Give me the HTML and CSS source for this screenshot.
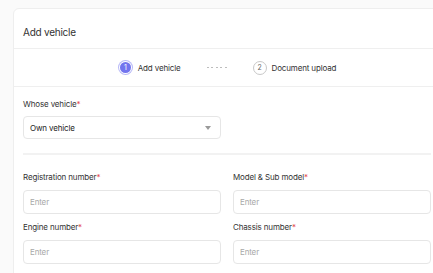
FILE: index.html
```html
<!DOCTYPE html>
<html lang="en">
<head>
  <meta charset="UTF-8">
  <title>Add vehicle</title>
  <link rel="stylesheet" href="styles.css">
</head>
<body>
  <div class="card">
    <div class="card-header">Add vehicle</div>

    <div class="stepper">
      <div class="step active">
        <span class="step-num">1</span>
        <span>Add vehicle</span>
      </div>
      <div class="step-line"></div>
      <div class="step">
        <span class="step-num">2</span>
        <span>Document upload</span>
      </div>
    </div>

    <div class="form">
      <div class="field">
        <label>Whose vehicle<span class="req">*</span></label>
        <div class="select">
          <span>Own vehicle</span>
          <svg width="6" height="4" viewBox="0 0 6 4"><path d="M0 0h6L3 4z" fill="#9a9a9a"/></svg>
        </div>
      </div>

      <hr class="divider">

      <div class="grid">
        <div class="field">
          <label>Registration number<span class="req">*</span></label>
          <input type="text" placeholder="Enter">
        </div>
        <div class="field">
          <label>Model &amp; Sub model<span class="req">*</span></label>
          <input type="text" placeholder="Enter">
        </div>
        <div class="field">
          <label>Engine number<span class="req">*</span></label>
          <input type="text" placeholder="Enter">
        </div>
        <div class="field">
          <label>Chassis number<span class="req">*</span></label>
          <input type="text" placeholder="Enter">
        </div>
      </div>
    </div>
  </div>
</body>
</html>
```

FILE: styles.css
```css
body {
  font-family: 'Inter', 'Noto Sans', sans-serif;
  background-color: #fafafa;
  margin: 0;
  padding: 8px 0 0 13px;
  overflow: hidden;
  height: 273px;
  box-sizing: border-box;
  color: #2b2b2b;
  letter-spacing: -0.15px;
}

.card {
  background-color: #fff;
  border: 1px solid #eeeeee;
  border-radius: 6px;
  width: 428px;
  box-sizing: border-box;
}

.card-header {
  height: 40px;
  box-sizing: border-box;
  padding: 17px 0 0 9px;
  font-size: 10px;
  letter-spacing: -0.25px;
  color: #333;
  border-bottom: 1px solid #efefef;
}

.stepper {
  height: 37px;
  display: flex;
  align-items: center;
  justify-content: center;
  gap: 12px;
  border-bottom: 1px solid #efefef;
  font-size: 8px;
}

.step {
  display: flex;
  align-items: center;
  gap: 5px;
  color: #333;
}

.step-num {
  width: 14px;
  height: 14px;
  box-sizing: border-box;
  border-radius: 50%;
  border: 1px solid #c8c8c8;
  display: flex;
  align-items: center;
  justify-content: center;
  font-size: 7px;
  color: #666;
}

.step.active .step-num {
  width: 11px;
  height: 11px;
  border: none;
  background-color: #7274ee;
  color: #fff;
  box-shadow: 0 0 0 1px #fff, 0 0 0 2px #b9baf7;
  margin: 0 2px;
}

.step-line {
  width: 20px;
  height: 1px;
  background: repeating-linear-gradient(to right, #bdbdbd 0 2px, transparent 2px 4.5px);
  margin: 0 14px;
}

.form {
  padding: 12px 9px 20px;
}

.field label {
  display: block;
  font-size: 8px;
  color: #333;
  margin-bottom: 7px;
}

.req {
  color: #e5484d;
}

.select {
  width: 198px;
  height: 23px;
  box-sizing: border-box;
  border: 1px solid #e6e6e6;
  border-radius: 4px;
  display: flex;
  align-items: center;
  justify-content: space-between;
  padding: 0 9px 0 6px;
  font-size: 8px;
  color: #222;
}

.divider {
  border: none;
  border-top: 2px solid #f2f2f2;
  margin: 14px 0 17px;
}

.grid {
  display: grid;
  grid-template-columns: 198px 198px;
  column-gap: 12px;
  row-gap: 8px;
}

.grid input {
  width: 100%;
  height: 24px;
  box-sizing: border-box;
  border: 1px solid #e6e6e6;
  border-radius: 4px;
  padding: 0 6px;
  font-family: inherit;
  font-size: 8px;
  letter-spacing: -0.15px;
  color: #222;
  outline: none;
}

.grid input::placeholder {
  color: #a8a8a8;
}
```
